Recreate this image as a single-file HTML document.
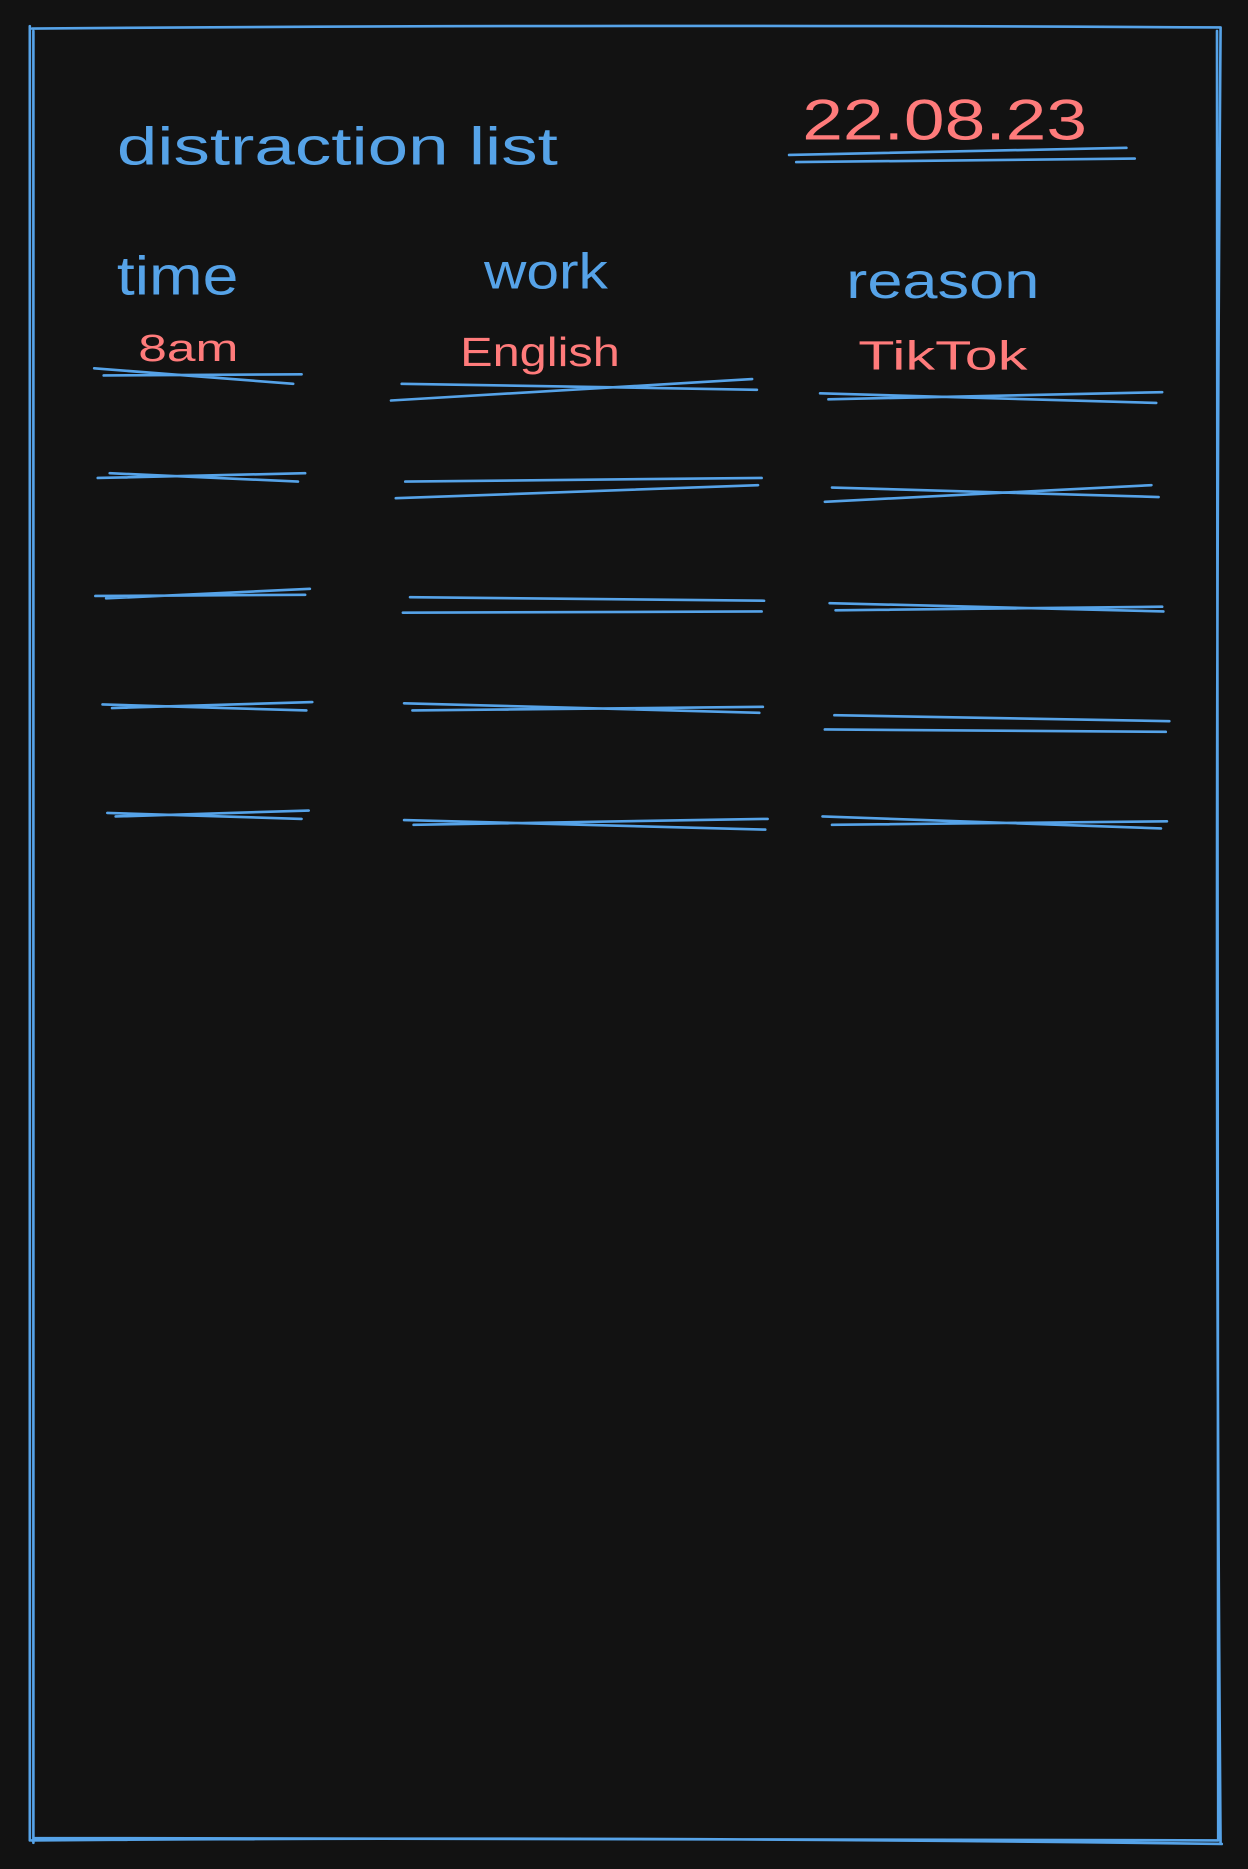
<!DOCTYPE html>
<html><head><meta charset="utf-8"><style>
html,body{margin:0;padding:0;background:#121212;}
svg{display:block;}
text{font-family:"Liberation Sans",sans-serif;}
</style></head><body>
<svg width="1248" height="1869" viewBox="0 0 1047 1568" xmlns="http://www.w3.org/2000/svg">
<rect width="1047" height="1568" fill="#121212"/>
<g fill="none" stroke="#56a3e8" stroke-width="2.2" stroke-linecap="round">
<path d="M27 24 Q500 20 1024 23 M25 22 Q22 800 25 1544 M28 26 Q26 800 28 1546 M1024 23 Q1018 800 1024 1547 M1021 26 Q1020 800 1022 1543 M26 1544 Q500 1540 1025 1547 M29 1542 Q500 1544 1022 1544"/>
<path d="M662 130 L945 124 M668 136 L952 133"/>
<path d="M79 309 L246 322 M87 315 L253 314"/>
<path d="M328 336 L631 318 M337 322 L635 327"/>
<path d="M688 330 L970 338 M695 335 L975 329"/>
<path d="M82 401 L256 397 M92 397 L250 404"/>
<path d="M332 418 L636 407 M340 404 L639 401"/>
<path d="M692 421 L966 407 M698 409 L972 417"/>
<path d="M80 500 L256 499 M89 502 L260 494"/>
<path d="M338 514 L639 513 M344 501 L641 504"/>
<path d="M696 506 L976 513 M701 512 L975 509"/>
<path d="M86 591 L257 596 M94 594 L262 589"/>
<path d="M339 590 L637 598 M346 596 L640 593"/>
<path d="M700 600 L981 605 M692 612 L978 614"/>
<path d="M90 682 L253 687 M97 685 L259 680"/>
<path d="M339 688 L642 696 M347 692 L644 687"/>
<path d="M690 685 L974 695 M698 692 L979 689"/>
</g>
<g fill="#56a3e8">
<text x="98" y="138" font-size="44" textLength="370" lengthAdjust="spacingAndGlyphs">distraction list</text>
<text x="98" y="247" font-size="46" textLength="102" lengthAdjust="spacingAndGlyphs">time</text>
<text x="406" y="242" font-size="42" textLength="104" lengthAdjust="spacingAndGlyphs">work</text>
<text x="710" y="250" font-size="42" textLength="162" lengthAdjust="spacingAndGlyphs">reason</text>
</g>
<g fill="#ff7b7b">
<text x="673" y="117" font-size="48" textLength="239" lengthAdjust="spacingAndGlyphs">22.08.23</text>
<text x="116" y="303" font-size="32" textLength="84" lengthAdjust="spacingAndGlyphs">8am</text>
<text x="386" y="307" font-size="34" textLength="134" lengthAdjust="spacingAndGlyphs">English</text>
<text x="720" y="310" font-size="34" textLength="142" lengthAdjust="spacingAndGlyphs">TikTok</text>
</g>
</svg>
</body></html>
